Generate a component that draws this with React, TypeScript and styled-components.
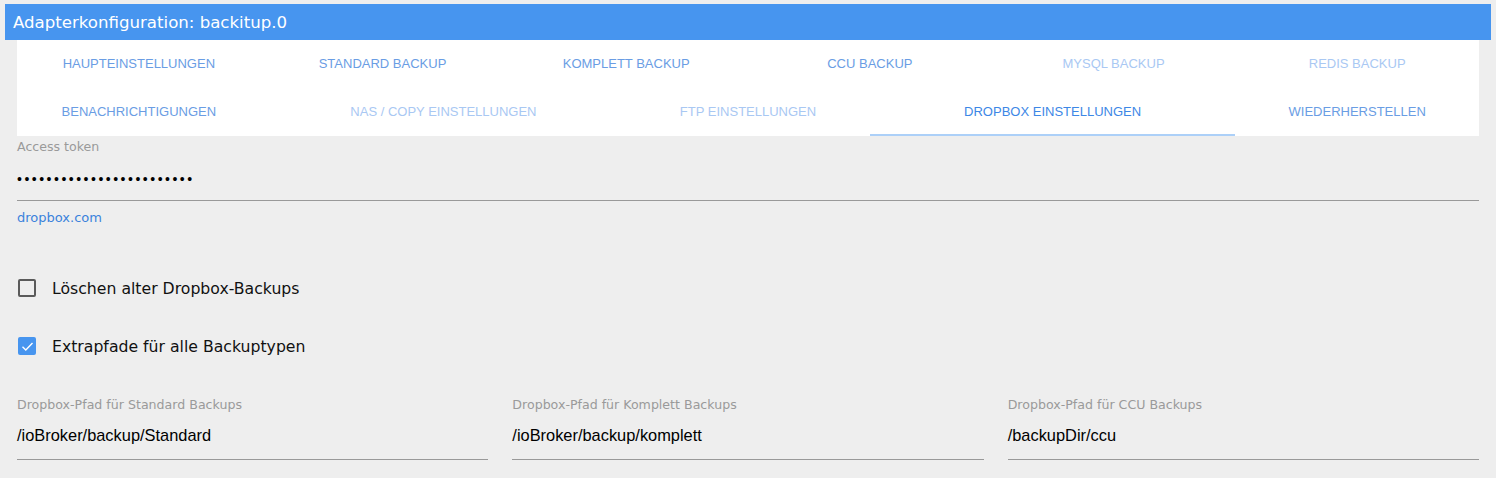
import React from "react";
import styled, { createGlobalStyle } from "styled-components";

const Global = createGlobalStyle`
  html, body { margin: 0; padding: 0; background: #eeeeee; }
  body { font-family: "Liberation Sans", Arial, sans-serif; }
  * { box-sizing: border-box; }
`;

const uiFont = `"DejaVu Sans", Verdana, sans-serif`;

const Page = styled.div`
  width: 1496px;
  height: 478px;
  background: #eeeeee;
  padding-top: 4px;
  overflow: hidden;
`;

const Header = styled.div`
  margin: 0 5px;
  height: 36px;
  background: #4795ef;
  color: #ffffff;
  font-family: ${uiFont};
  font-size: 16.6px;
  display: flex;
  align-items: center;
  padding-left: 8px;
  padding-top: 1px;
`;

const Body = styled.div`
  padding: 0 17px;
`;

const TabPanel = styled.div`
  background: #ffffff;
  display: flex;
  flex-direction: column;
`;

const TabRow = styled.div`
  display: flex;
  height: 48px;
`;

const Tab = styled.div<{ $grow?: number; $state: "normal" | "disabled" | "active" }>`
  flex: ${(p) => p.$grow ?? 1} 1 0;
  display: flex;
  align-items: center;
  justify-content: center;
  font-size: 13px;
  text-transform: uppercase;
  color: ${(p) =>
    p.$state === "active" ? "#3d87e6" : p.$state === "disabled" ? "#a9c8f3" : "#6a9de4"};
  border-bottom: 2px solid ${(p) => (p.$state === "active" ? "#acd0f8" : "transparent")};
  padding-top: 1px;
`;

const Field = styled.div`
  display: flex;
  flex-direction: column;
`;

const FieldLabel = styled.div`
  font-family: ${uiFont};
  font-size: 12.6px;
  color: #9a9a9a;
  line-height: 14px;
`;

const FieldValue = styled.div`
  font-size: 16.4px;
  color: #000000;
  height: 48px;
  display: flex;
  align-items: center;
  border-bottom: 1px solid #999999;
`;

const TokenField = styled(Field)`
  margin-top: 4px;
`;

const TokenValue = styled(FieldValue)`
  height: 47px;
  padding-top: 4px;
  font-size: 14px;
  letter-spacing: 2.5px;
`;

const Helper = styled.a`
  font-family: ${uiFont};
  font-size: 13px;
  color: #3b82dc;
  text-decoration: none;
  margin-top: 10px;
  line-height: 14px;
  align-self: flex-start;
`;

const CheckRow = styled.label<{ $top: number }>`
  display: flex;
  align-items: center;
  gap: 16px;
  margin-top: ${(p) => p.$top}px;
  font-family: ${uiFont};
  font-size: 15.7px;
  color: #111111;
  height: 20px;
`;

const Box = styled.span<{ $checked?: boolean }>`
  width: 18px;
  height: 18px;
  border-radius: 2px;
  display: inline-flex;
  align-items: center;
  justify-content: center;
  background: ${(p) => (p.$checked ? "#4795ef" : "transparent")};
  border: ${(p) => (p.$checked ? "none" : "2px solid #5a5a5a")};
  margin-left: 1px;
`;

const PathGrid = styled.div`
  display: grid;
  grid-template-columns: repeat(3, 1fr);
  column-gap: 24px;
  margin-top: 42px;
`;

const tabsRow1 = [
  { t: "Haupteinstellungen", s: "normal" },
  { t: "Standard Backup", s: "normal" },
  { t: "Komplett Backup", s: "normal" },
  { t: "CCU Backup", s: "normal" },
  { t: "MySQL Backup", s: "disabled" },
  { t: "Redis Backup", s: "disabled" },
] as const;

const tabsRow2 = [
  { t: "Benachrichtigungen", s: "normal", g: 1 },
  { t: "NAS / Copy Einstellungen", s: "disabled", g: 1.5 },
  { t: "FTP Einstellungen", s: "disabled", g: 1 },
  { t: "Dropbox Einstellungen", s: "active", g: 1.5 },
  { t: "Wiederherstellen", s: "normal", g: 1 },
] as const;

const paths = [
  { l: "Dropbox-Pfad für Standard Backups", v: "/ioBroker/backup/Standard" },
  { l: "Dropbox-Pfad für Komplett Backups", v: "/ioBroker/backup/komplett" },
  { l: "Dropbox-Pfad für CCU Backups", v: "/backupDir/ccu" },
];

export default function App() {
  return (
    <Page>
      <Global />
      <Header>Adapterkonfiguration: backitup.0</Header>
      <Body>
        <TabPanel>
          <TabRow>
            {tabsRow1.map((x) => (
              <Tab key={x.t} $state={x.s}>
                {x.t}
              </Tab>
            ))}
          </TabRow>
          <TabRow>
            {tabsRow2.map((x) => (
              <Tab key={x.t} $state={x.s} $grow={x.g}>
                {x.t}
              </Tab>
            ))}
          </TabRow>
        </TabPanel>
        <TokenField>
          <FieldLabel>Access token</FieldLabel>
          <TokenValue>{"•".repeat(24)}</TokenValue>
          <Helper href="#">dropbox.com</Helper>
        </TokenField>
        <CheckRow $top={53}>
          <Box />
          Löschen alter Dropbox-Backups
        </CheckRow>
        <CheckRow $top={38}>
          <Box $checked>
            <svg width="13" height="11" viewBox="0 0 13 11">
              <path d="M1.5 5.8 L4.8 9 L11.5 2" fill="none" stroke="#ffffff" strokeWidth="1.4" />
            </svg>
          </Box>
          Extrapfade für alle Backuptypen
        </CheckRow>
        <PathGrid>
          {paths.map((p) => (
            <Field key={p.l}>
              <FieldLabel>{p.l}</FieldLabel>
              <FieldValue>{p.v}</FieldValue>
            </Field>
          ))}
        </PathGrid>
      </Body>
    </Page>
  );
}
